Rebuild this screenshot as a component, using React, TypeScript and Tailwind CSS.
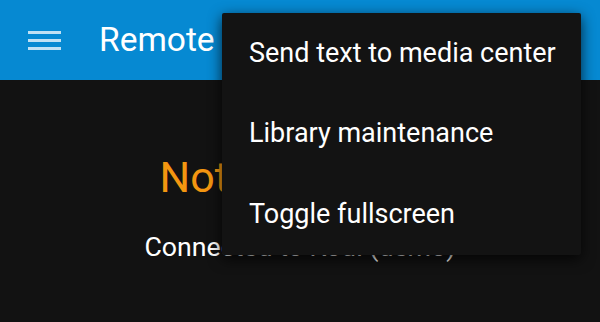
const menuItems = ["Send text to media center", "Library maintenance", "Toggle fullscreen"];

const App = () => {
  return (
    <div className="relative h-[322px] w-[600px] overflow-hidden bg-[#121212] font-['Roboto',sans-serif]">
      <header className="flex h-[80px] items-center bg-[#0689d2] pl-[28px]">
        <div className="flex w-[33px] flex-col gap-[5px]">
          <span className="h-[3px] bg-white/75" />
          <span className="h-[3px] bg-white/75" />
          <span className="h-[3px] bg-white/75" />
        </div>
        <h1 className="ml-[38px] text-[33.5px] leading-none text-white">Remote</h1>
      </header>
      <main className="flex flex-col items-center pt-[76px]">
        <p className="text-[43px] leading-none text-[#f39610]">Not connected</p>
        <p className="mt-[35px] text-[26.7px] leading-none text-white">
          Connected to Kodi (demo)
        </p>
      </main>
      <ul className="absolute top-[13px] left-[222px] w-[359px] rounded-[2px] bg-[#131313] shadow-[0_4px_14px_rgba(0,0,0,0.75)]">
        {menuItems.map((m) => (
          <li key={m} className="flex h-[80.5px] items-center pl-[27px] text-[27px] leading-none text-white">
            {m}
          </li>
        ))}
      </ul>
    </div>
  );
};

export default App;
